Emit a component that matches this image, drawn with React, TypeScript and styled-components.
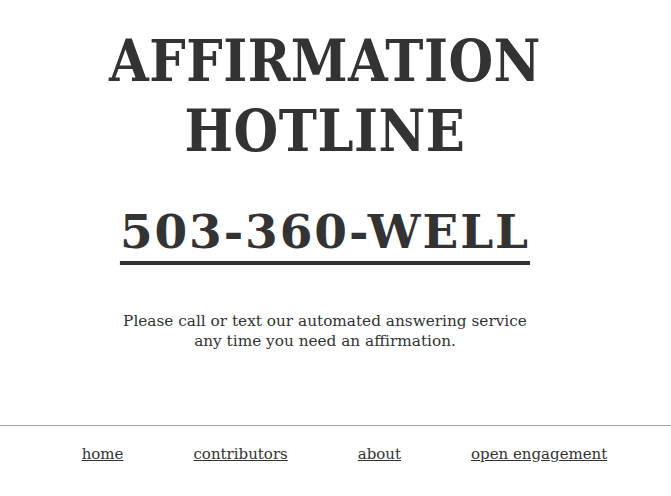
import React from "react"
import styled, { createGlobalStyle } from "styled-components"

const GlobalStyle = createGlobalStyle`
  html, body {
    margin: 0;
    padding: 0;
    background: #ffffff;
    color: #333333;
  }
`

const Page = styled.div`
  width: 671px;
  display: flex;
  flex-direction: column;
`

const Main = styled.main`
  width: 650px;
  display: flex;
  flex-direction: column;
  align-items: center;
`

const Title = styled.h1`
  margin: 26px 0 0;
  font-family: "DejaVu Serif Condensed", "DejaVu Serif", serif;
  font-stretch: condensed;
  font-weight: bold;
  font-size: 57px;
  line-height: 70px;
  text-align: center;
  letter-spacing: 0.5px;
`

const Phone = styled.a`
  margin-top: 36px;
  font-family: "DejaVu Serif", serif;
  font-weight: bold;
  font-size: 47px;
  line-height: 60px;
  letter-spacing: 1.9px;
  color: #333333;
  text-decoration: underline;
  text-decoration-thickness: 4px;
  text-underline-offset: 13px;
`

const Blurb = styled.p`
  margin: 49px 0 0;
  width: 420px;
  font-family: "DejaVu Serif", serif;
  font-size: 15.3px;
  line-height: 20px;
  text-align: center;
`

const Footer = styled.footer`
  margin-top: 74px;
  width: 100%;
  border-top: 1px solid #a6a6a6;
`

const Nav = styled.nav`
  display: flex;
  justify-content: center;
  gap: 70px;
  padding: 19px 0 0 18px;
`

const NavLink = styled.a`
  font-family: "DejaVu Serif", serif;
  font-size: 15px;
  color: #333333;
  text-decoration: underline;
`

export default function App() {
  return (
    <Page>
      <GlobalStyle />
      <Main>
        <Title>
          AFFIRMATION
          <br />
          HOTLINE
        </Title>
        <Phone href="#">503-360-WELL</Phone>
        <Blurb>
          Please call or text our automated answering service any time you need an affirmation.
        </Blurb>
      </Main>
      <Footer>
        <Nav>
          <NavLink href="#">home</NavLink>
          <NavLink href="#">contributors</NavLink>
          <NavLink href="#">about</NavLink>
          <NavLink href="#">open engagement</NavLink>
        </Nav>
      </Footer>
    </Page>
  )
}
